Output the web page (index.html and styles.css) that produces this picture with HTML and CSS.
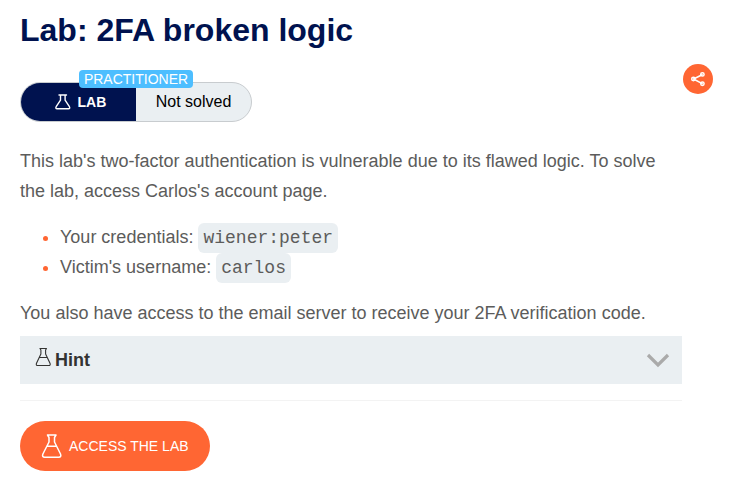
FILE: index.html
```
<!DOCTYPE html>
<html lang="en">
<head>
<meta charset="utf-8">
<title>Lab: 2FA broken logic</title>
<link rel="stylesheet" href="styles.css">
</head>
<body>
<main class="page">
  <h1 class="title">Lab: 2FA broken logic</h1>
  <div class="meta">
    <div class="status">
      <span class="level">PRACTITIONER</span>
      <div class="status-label">
        <svg class="status-flask" viewBox="0 0 16 16" width="16" height="16"><path d="M4 1h7.500M5.500 1.300v4.900L1.200 12.700q-1 2 .9 2h11.400q1.900 0 .9-2L10.100 6.200V1.300"/></svg>
        <span>LAB</span>
      </div>
      <div class="status-value">Not solved</div>
    </div>
    <a class="share" aria-label="Share">
      <svg viewBox="0 0 30 30" width="30" height="30"><path d="M19.200 10.800 10.500 15l8.700 4.600"/><circle cx="19.400" cy="10.400" r="1.700"/><circle cx="10.400" cy="15" r="1.700"/><circle cx="19.400" cy="19.700" r="1.700"/></svg>
    </a>
  </div>
  <div class="content">
    <p>This lab's two-factor authentication is vulnerable due to its flawed logic. To solve the lab, access Carlos's account page.</p>
    <ul>
      <li>Your credentials: <code>wiener:peter</code></li>
      <li>Victim's username: <code>carlos</code></li>
    </ul>
    <p>You also have access to the email server to receive your 2FA verification code.</p>
    <div class="hint">
      <svg class="hint-flask" viewBox="0 0 16 20" width="16" height="20"><path d="M5 1.500h6.500l-.9 1.500v4L15 16.200q.8 2.300-1.300 2.300H2.800q-2.100 0-1.300-2.300L5.900 7V3L5 1.500M4.300 10.500h7.900"/></svg>
      <span>Hint</span>
      <svg class="chevron" viewBox="0 0 24 16" width="24" height="16"><path d="M2 3l10 10L22 3"/></svg>
    </div>
    <hr>
    <a class="access">
      <svg viewBox="0 0 22 26" width="22" height="26"><path d="M6.500 2H15l-1.500 2.500V9l6 12q1.200 3.300-1.800 3.300H3.700q-3 0-1.800-3.300L8 9V4.500L6.500 2M5.800 13.300h9.800"/></svg>
      <span>ACCESS THE LAB</span>
    </a>
  </div>
</main>
</body>
</html>
```

FILE: styles.css
```
* { box-sizing: border-box; }
body {
  margin: 0;
  background: #fff;
  color: #5c5c5b;
  font-family: "Liberation Sans", Arial, sans-serif;
  font-size: 18px;
  line-height: 30px;
}
svg { fill: none; flex: none; stroke-linecap: round; stroke-linejoin: round; }
.page { width: 742px; padding: 10px 29px 0 20px; }
.title { margin: 0; color: #00124f; font-size: 32px; line-height: 40px; font-weight: 700; }
.meta {
  display: flex;
  justify-content: space-between;
  align-items: flex-start;
  padding-top: 14px;
}
.status {
  position: relative;
  display: flex;
  width: 232px;
  height: 40px;
  margin-top: 18px;
  border: 1px solid #c8cccf;
  border-radius: 20px;
  background: #eaeff2;
  font-size: 16px;
  line-height: 38px;
}
.level {
  position: absolute;
  left: 58px;
  top: -13px;
  width: 114px;
  height: 18px;
  border-radius: 4px;
  background: #4dbeff;
  color: #fff;
  font-size: 14px;
  line-height: 18px;
  text-align: center;
}
.status-label {
  display: flex;
  align-items: center;
  width: 115px;
  padding-left: 33.5px;
  gap: 7px;
  border-radius: 19px 0 0 19px;
  background: #00124f;
  color: #fff;
  font-size: 14px;
  font-weight: 700;
}
.status-flask { stroke: #fff; stroke-width: 1.4; }
.status-value { flex: 1; text-align: center; color: #000; }
.share { width: 30px; height: 30px; border-radius: 50%; background: #ff6633; }
.share svg { display: block; stroke: #fff; stroke-width: 1.5; }
.content { width: 662px; padding-top: 24px; }
p { margin: 0; }
ul { margin: 16px 0; padding-left: 40px; }
li::marker { color: #ff6633; }
code {
  padding: 5px;
  border-radius: 6px;
  background: #eaeff2;
  font-family: "Liberation Mono", monospace;
  font-size: 18px;
  line-height: 20px;
}
.hint {
  display: flex;
  align-items: center;
  height: 48px;
  margin-top: 8px;
  padding: 0 12px 0 15px;
  background: #eaeff2;
  color: #333332;
  font-weight: 700;
}
.hint-flask { margin: 0 4px 7px 0; stroke: #333332; stroke-width: 1.1; }
.chevron { margin-left: auto; stroke: #aaa; stroke-width: 3.2; stroke-linecap: butt; stroke-linejoin: miter; }
hr { height: 1px; margin: 16px 0 20px; border: 0; background: #f3f3f3; }
.access {
  display: flex;
  align-items: center;
  gap: 6px;
  width: 190px;
  height: 50px;
  padding-left: 21px;
  border-radius: 25px;
  background: #ff6633;
  color: #fff;
  font-size: 14px;
}
.access svg { stroke: #fff; stroke-width: 1.5; }
```
